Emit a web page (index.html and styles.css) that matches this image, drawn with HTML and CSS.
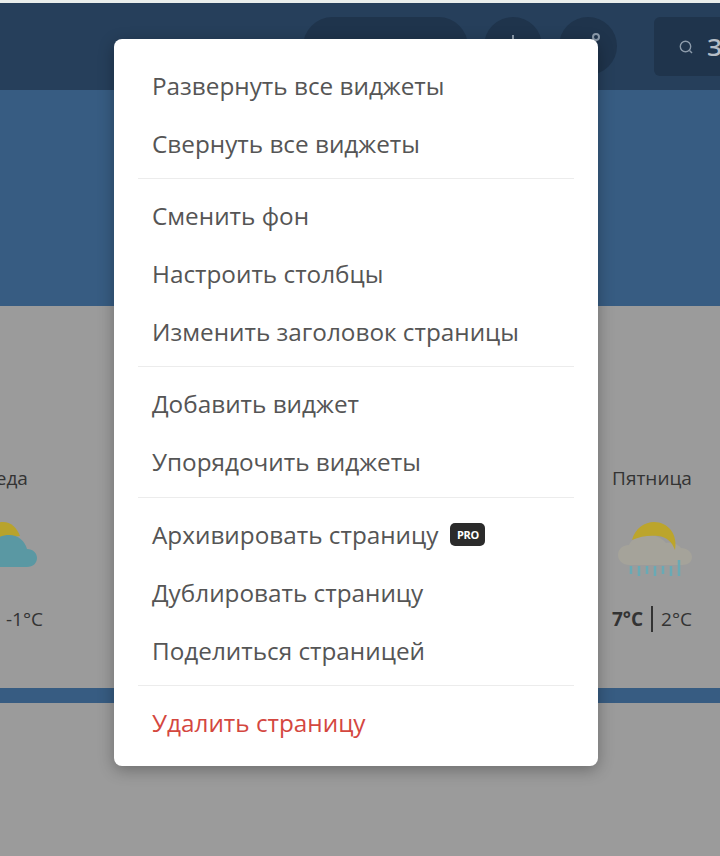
FILE: index.html
```html
<!DOCTYPE html>
<html lang="ru">
<head>
<meta charset="utf-8">
<title>Меню страницы</title>
<link rel="stylesheet" href="styles.css">
</head>
<body>
<div class="page">
  <header class="top">
    <div class="pill"></div>
    <div class="round"><span class="plus"></span></div>
    <div class="round"><span class="pin"></span></div>
    <div class="search">
      <svg class="lens" width="16" height="16" viewBox="0 0 16 16"><circle cx="7.500" cy="7.500" r="5.200" fill="none" stroke="#8b9aaa" stroke-width="1.400"/><path d="M11.500 11.500l2.500 2.500" stroke="#8b9aaa" stroke-width="1.400"/></svg>
      <span class="search-text">З</span>
    </div>
  </header>
  <div class="hero"></div>
  <section class="weather">
    <div class="day day-left">
      <div class="day-name">Среда</div>
      <svg class="wicon" width="80" height="60" viewBox="-2 0 80 60">
        <path d="M22 20C24 8 33 2 41 2C49 2 55 8 58 16L40 18z" fill="#b8a32c"/>
        <path d="M14 47C8 47 4 43 4 37C4 31 9 27 16 27C20 27 26 27 30 27C31 19 39 15 47 15C56 15 63 21 65 29C71 29 75 33 75 38C75 43 71 47 65 47z" fill="#5a98a3"/>
      </svg>
      <div class="temps"><span class="hi">2°C</span><span class="sep"></span><span>-1°C</span></div>
    </div>
    <div class="day day-right">
      <div class="day-name">Пятница</div>
      <svg class="wicon" width="80" height="60" viewBox="0 0 80 60">
        <path d="M18 45C9 45 6 39 6 35C6 29 11 25 17 25C20 18 28 15 36 15C44 15 50 18 54 23C61 22 67 25 69 28C75 28 80 32 80 37C80 42 76 45 70 45z" fill="#a5a39a"/>
        <path d="M20 20C23 8 33 2 42 2C56 2 66 14 63 30C60 22 55 17 46 16C38 15 28 16 20 20z" fill="#bca52c"/>
        <path d="M19 46v8M27 46v10M35 46v8M43 46v10M51 46v8M59 46v10M67 40v16" stroke="#68aab5" stroke-width="2.500"/>
      </svg>
      <div class="temps"><span class="hi">7°C</span><span class="sep"></span><span>2°C</span></div>
    </div>
  </section>
  <div class="bar"></div>
  <div class="rest"></div>

  <nav class="menu">
    <a class="item">Развернуть все виджеты</a>
    <a class="item">Свернуть все виджеты</a>
    <hr class="div">
    <a class="item">Сменить фон</a>
    <a class="item">Настроить столбцы</a>
    <a class="item">Изменить заголовок страницы</a>
    <hr class="div">
    <a class="item">Добавить виджет</a>
    <a class="item">Упорядочить виджеты</a>
    <hr class="div div-low">
    <a class="item">Архивировать страницу <span class="pro">PRO</span></a>
    <a class="item">Дублировать страницу</a>
    <a class="item">Поделиться страницей</a>
    <hr class="div">
    <a class="item danger">Удалить страницу</a>
  </nav>
</div>
</body>
</html>
```

FILE: styles.css
```css
html, body {margin:0; padding:0; background:#9b9b9b;}
body {font-family:"Open Sans","Noto Sans",sans-serif; overflow:hidden;}
.page {position:relative; width:720px; height:856px; overflow:hidden; border-top:3px solid #e9eeec; box-sizing:border-box;}

.top {height:87px; background:#263f5b; display:flex; align-items:flex-start; padding:14px 0 0 303px; box-sizing:border-box;}
.pill {width:165px; height:59px; border-radius:30px; background:#1f344c; margin-right:16px;}
.round {width:58px; height:58px; border-radius:50%; background:#1f344c; margin-right:17px; position:relative;}
.round:nth-child(3) {margin-right:37px;}
.plus {position:absolute; left:28px; top:18px; width:2px; height:8px; background:#8b9aaa;}
.pin {position:absolute; left:33px; top:16px; width:4px; height:4px; border:2px solid #8b9aaa; border-radius:50%;}
.search {flex:1; height:59px; background:#1f344c; border-radius:6px 0 0 6px; display:flex; align-items:center; padding-left:24px; gap:13px; color:#b5bdc6; font-size:24px; font-weight:600; overflow:hidden;}
.lens {flex:none;}

.hero {height:216px; background:#375c82;}

.weather {height:382px; background:#9b9b9b; position:relative;}
.day {position:absolute; top:159px; text-align:center; color:#333; font-size:19px;}
.day-left {left:-100px; width:200px;}
.day-right {left:552px; width:200px;}
.day-name {line-height:26px;}
.wicon {display:block; margin:29px auto 0;}
.temps {display:flex; justify-content:center; align-items:center; gap:8px; margin-top:25px; line-height:28px;}
.hi {font-weight:700;}
.sep {width:2px; height:26px; background:#333;}

.bar {height:15px; background:#375c82;}
.rest {height:150px;}

.menu {position:absolute; left:114px; top:36px; width:484px; height:727px; box-sizing:border-box; padding:17px 24px 13px; background:#fff; border-radius:8px; box-shadow:0 4px 16px rgba(0,0,0,.3);}
.item {display:flex; align-items:center; height:58px; padding-left:14px; font-size:24.300px; color:#555;}
.div {border:0; border-top:1px solid #ececec; margin:6px 0 7px; height:0;}
.div-low {margin-top:7px;}
.danger {color:#d4473f;}
.pro {display:inline-block; margin-left:12px; width:35px; height:23px; line-height:23px; background:#2b2b2b; border-radius:5px; color:#fff; font-size:11px; font-weight:700; letter-spacing:-.3px; text-align:center;}
```
